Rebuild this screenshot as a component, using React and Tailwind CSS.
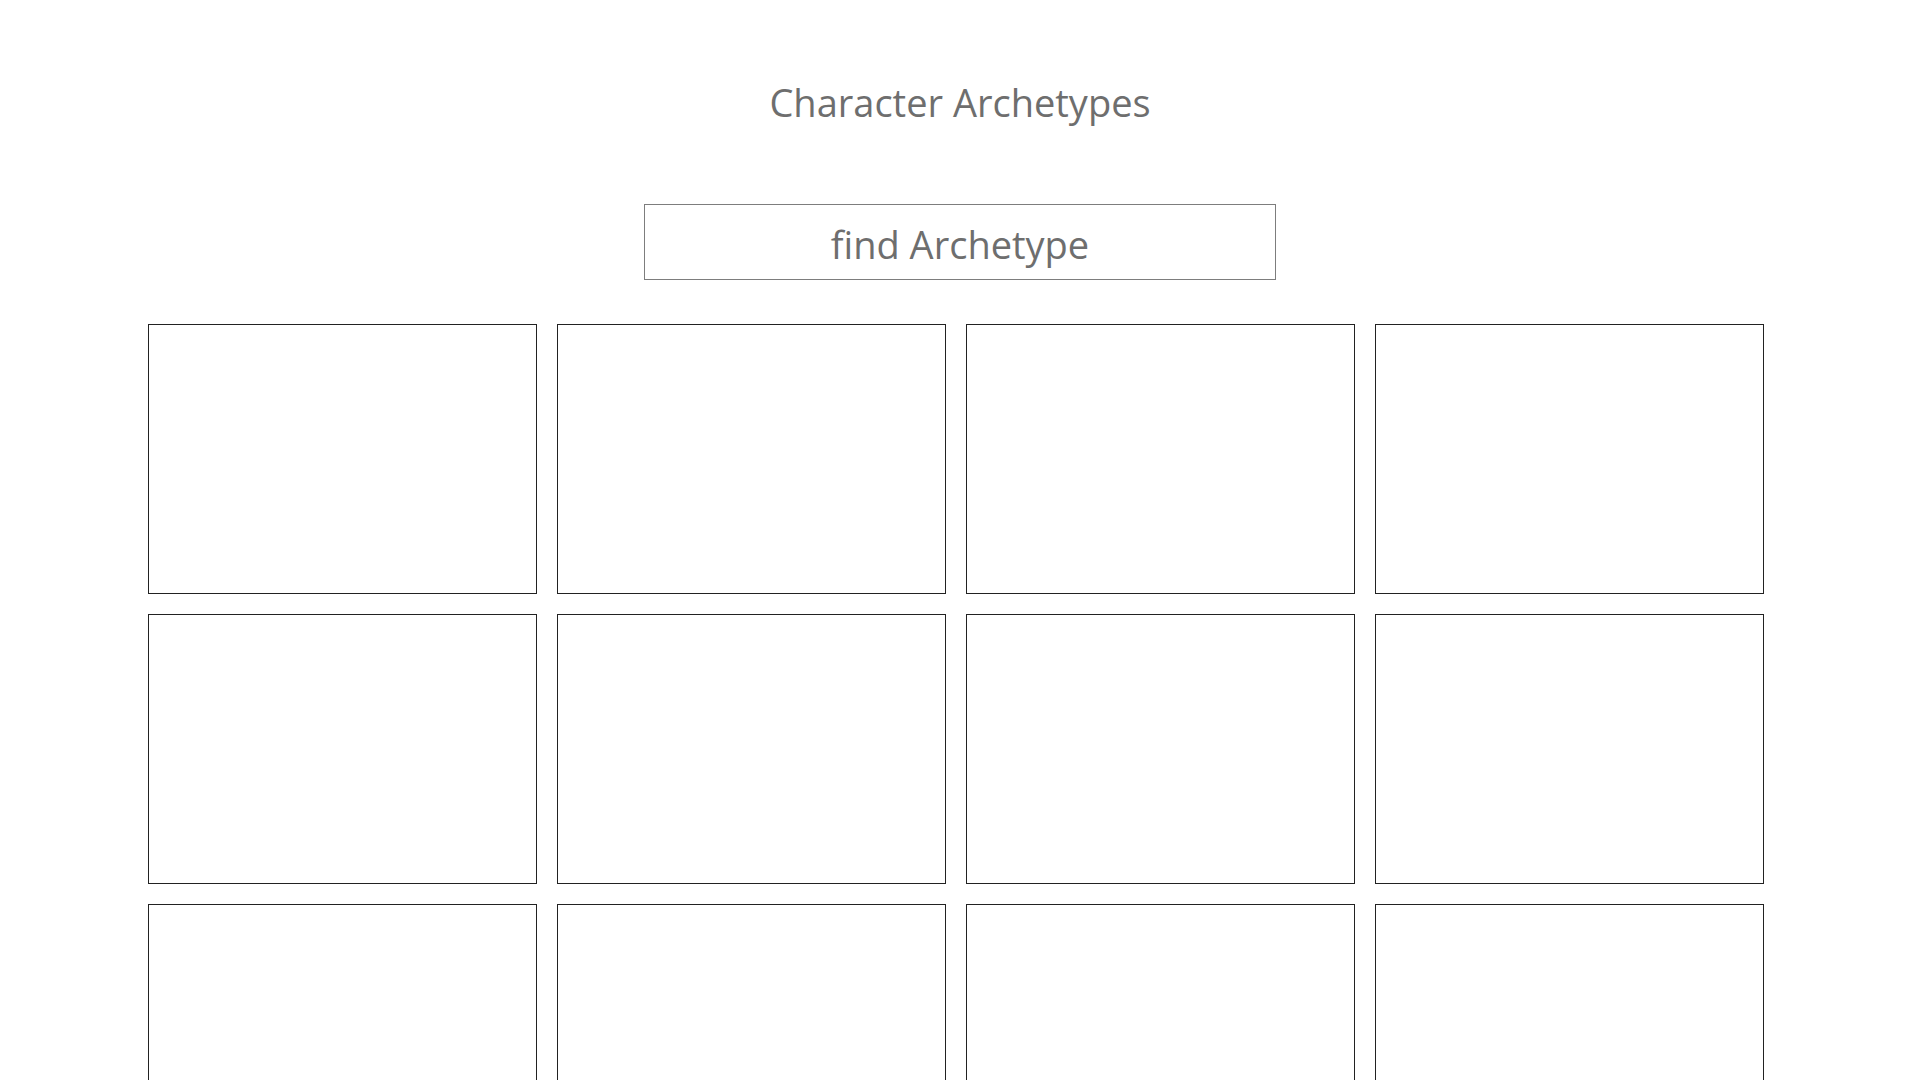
export default function App() {
  const cards = Array.from({ length: 12 }, (_, i) => i);
  return (
    <div
      className="h-screen w-full overflow-hidden bg-white"
      style={{ fontFamily: '"Open Sans", "Noto Sans", sans-serif' }}
    >
      <h1 className="pt-[84px] text-center text-[38px] leading-[36px] font-normal text-[#6e6e6e]">
        Character Archetypes
      </h1>
      <div className="mt-[84px] flex justify-center">
        <div className="flex h-[76px] w-[632px] items-center justify-center border border-[#7d7d7d] pt-[5px] text-[38px] text-[#6e6e6e]">
          find Archetype
        </div>
      </div>
      <div className="mt-[44px] grid grid-cols-[repeat(4,389px)] gap-[20px] pl-[148px]">
        {cards.map((i) => (
          <div key={i} className="h-[270px] border border-[#222222] bg-white" />
        ))}
      </div>
    </div>
  );
}
